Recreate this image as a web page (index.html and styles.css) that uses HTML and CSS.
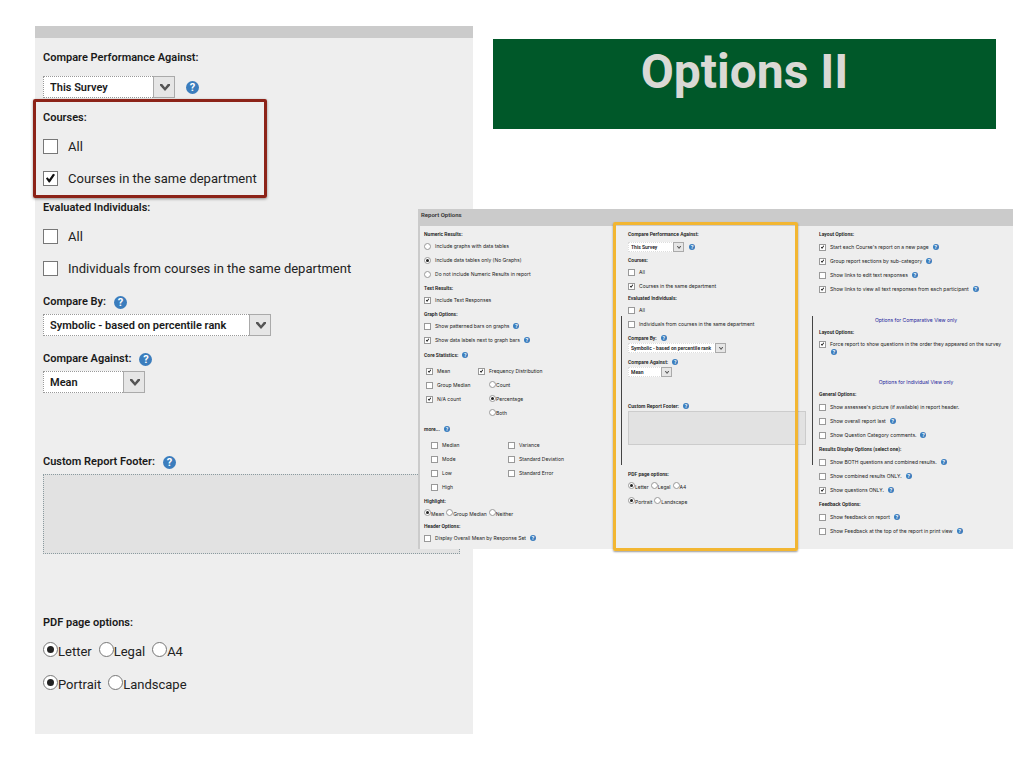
FILE: index.html
```html
<!DOCTYPE html>
<html lang="en">
<head>
    <meta charset="UTF-8">
    <meta name="viewport" content="width=device-width, initial-scale=1.0">
    <title>Options II</title>
    <link rel="stylesheet" href="styles.css">
</head>
<body>
    <main class="slide">
        <form class="panel">
            <div class="panel-bar"></div>
            <div class="panel-body">
                <section class="group">
                    <label class="heading" for="compare-to">Compare Performance Against:</label>
                    <div class="field space-md">
                        <span class="picker"><select id="compare-to" class="w-md"><option>This Survey</option></select></span>
                        <button type="button" class="help">?</button>
                    </div>
                </section>
                <section class="group space-md marked">
                    <h2 class="heading">Courses:</h2>
                    <label class="option"><input type="checkbox">All</label>
                    <label class="option"><input type="checkbox" checked>Courses in the same department</label>
                </section>
                <section class="group">
                    <h2 class="heading">Evaluated Individuals:</h2>
                    <label class="option"><input type="checkbox">All</label>
                    <label class="option"><input type="checkbox">Individuals from courses in the same department</label>
                </section>
                <section class="group space-sm">
                    <div class="heading"><label for="compare-by">Compare By:</label><button type="button" class="help">?</button></div>
                    <div class="field">
                        <span class="picker"><select id="compare-by" class="w-lg"><option>Symbolic - based on percentile rank</option></select></span>
                    </div>
                </section>
                <section class="group space-lg">
                    <div class="heading"><label for="compare-against">Compare Against:</label><button type="button" class="help">?</button></div>
                    <div class="field">
                        <span class="picker"><select id="compare-against" class="w-sm"><option>Mean</option></select></span>
                    </div>
                </section>
                <section class="group space-xl">
                    <div class="heading"><label for="footer-text">Custom Report Footer:</label><button type="button" class="help">?</button></div>
                    <textarea id="footer-text"></textarea>
                </section>
                <section class="group space-xl">
                    <h2 class="heading">PDF page options:</h2>
                    <div class="choices">
                        <label><input type="radio" name="paper" checked>Letter</label>
                        <label><input type="radio" name="paper">Legal</label>
                        <label><input type="radio" name="paper">A4</label>
                    </div>
                    <div class="choices">
                        <label><input type="radio" name="direction" checked>Portrait</label>
                        <label><input type="radio" name="direction">Landscape</label>
                    </div>
                </section>
            </div>
        </form>

        <header class="title">
            <h1>Options II</h1>
        </header>

        <!-- full options page, laid over the panel -->
        <form class="report">
            <h2 class="report-title">Report Options</h2>
            <div class="report-body">
                <div class="column">
                    <section class="group">
                        <h3 class="heading">Numeric Results:</h3>
                        <label class="option"><input type="radio" name="numeric">Include graphs with data tables</label>
                        <label class="option"><input type="radio" name="numeric" checked>Include data tables only (No Graphs)</label>
                        <label class="option"><input type="radio" name="numeric">Do not include Numeric Results in report</label>
                    </section>
                    <section class="group">
                        <h3 class="heading">Text Results:</h3>
                        <label class="option"><input type="checkbox" checked>Include Text Responses</label>
                    </section>
                    <section class="group">
                        <h3 class="heading">Graph Options:</h3>
                        <div class="option"><label><input type="checkbox">Show patterned bars on graphs</label><button type="button" class="help">?</button></div>
                        <div class="option"><label><input type="checkbox" checked>Show data labels next to graph bars</label><button type="button" class="help">?</button></div>
                    </section>
                    <section class="group space-sm">
                        <div class="heading"><h3>Core Statistics:</h3><button type="button" class="help">?</button></div>
                        <div class="stats">
                            <div>
                                <label class="option"><input type="checkbox" checked>Mean</label>
                                <label class="option"><input type="checkbox">Group Median</label>
                                <label class="option"><input type="checkbox" checked>N/A count</label>
                            </div>
                            <div>
                                <label class="option"><input type="checkbox" checked>Frequency Distribution</label>
                                <div class="choices"><label><input type="radio" name="freq">Count</label></div>
                                <div class="choices"><label><input type="radio" name="freq" checked>Percentage</label></div>
                                <div class="choices"><label><input type="radio" name="freq">Both</label></div>
                            </div>
                        </div>
                    </section>
                    <section class="group space-md">
                        <div class="heading"><h3>more...</h3><button type="button" class="help">?</button></div>
                        <div class="stats more">
                            <div>
                                <label class="option"><input type="checkbox">Median</label>
                                <label class="option"><input type="checkbox">Mode</label>
                                <label class="option"><input type="checkbox">Low</label>
                                <label class="option"><input type="checkbox">High</label>
                            </div>
                            <div>
                                <label class="option"><input type="checkbox">Variance</label>
                                <label class="option"><input type="checkbox">Standard Deviation</label>
                                <label class="option"><input type="checkbox">Standard Error</label>
                            </div>
                        </div>
                    </section>
                    <section class="group">
                        <h3 class="heading">Highlight:</h3>
                        <div class="choices">
                            <label><input type="radio" name="highlight" checked>Mean</label>
                            <label><input type="radio" name="highlight">Group Median</label>
                            <label><input type="radio" name="highlight">Neither</label>
                        </div>
                    </section>
                    <section class="group space-none">
                        <h3 class="heading">Header Options:</h3>
                        <div class="option"><label><input type="checkbox">Display Overall Mean by Response Set</label><button type="button" class="help">?</button></div>
                    </section>
                </div>

                <div class="column ruled boxed">
                    <section class="group">
                        <label class="heading" for="r-compare-to">Compare Performance Against:</label>
                        <div class="field space-sm">
                            <span class="picker"><select id="r-compare-to" class="w-md"><option>This Survey</option></select></span>
                            <button type="button" class="help">?</button>
                        </div>
                    </section>
                    <section class="group space-sm">
                        <h3 class="heading">Courses:</h3>
                        <label class="option"><input type="checkbox">All</label>
                        <label class="option"><input type="checkbox" checked>Courses in the same department</label>
                    </section>
                    <section class="group space-none">
                        <h3 class="heading">Evaluated Individuals:</h3>
                        <label class="option"><input type="checkbox">All</label>
                        <label class="option"><input type="checkbox">Individuals from courses in the same department</label>
                    </section>
                    <section class="group">
                        <div class="heading"><label for="r-compare-by">Compare By:</label><button type="button" class="help">?</button></div>
                        <div class="field">
                            <span class="picker"><select id="r-compare-by" class="w-lg"><option>Symbolic - based on percentile rank</option></select></span>
                        </div>
                    </section>
                    <section class="group space-md">
                        <div class="heading"><label for="r-compare-against">Compare Against:</label><button type="button" class="help">?</button></div>
                        <div class="field">
                            <span class="picker"><select id="r-compare-against" class="w-sm"><option>Mean</option></select></span>
                        </div>
                    </section>
                    <section class="group space-xl">
                        <div class="heading"><label for="r-footer-text">Custom Report Footer:</label><button type="button" class="help">?</button></div>
                        <textarea id="r-footer-text"></textarea>
                    </section>
                    <section class="group space-xl">
                        <h3 class="heading">PDF page options:</h3>
                        <div class="choices">
                            <label><input type="radio" name="r-paper" checked>Letter</label>
                            <label><input type="radio" name="r-paper">Legal</label>
                            <label><input type="radio" name="r-paper">A4</label>
                        </div>
                        <div class="choices">
                            <label><input type="radio" name="r-direction" checked>Portrait</label>
                            <label><input type="radio" name="r-direction">Landscape</label>
                        </div>
                    </section>
                </div>

                <div class="column ruled views">
                    <section class="group">
                        <h3 class="heading">Layout Options:</h3>
                        <div class="option"><label><input type="checkbox" checked>Start each Course's report on a new page</label><button type="button" class="help">?</button></div>
                        <div class="option"><label><input type="checkbox" checked>Group report sections by sub-category</label><button type="button" class="help">?</button></div>
                        <div class="option"><label><input type="checkbox">Show links to edit text responses</label><button type="button" class="help">?</button></div>
                        <div class="option"><label><input type="checkbox" checked>Show links to view all text responses from each participant</label><button type="button" class="help">?</button></div>
                    </section>
                    <p class="note">Options for Comparative View only</p>
                    <section class="group space-none">
                        <h3 class="heading">Layout Options:</h3>
                        <div class="option wrapped"><label><input type="checkbox" checked>Force report to show questions in the order they appeared on the survey</label><button type="button" class="help">?</button></div>
                    </section>
                    <p class="note">Options for Individual View only</p>
                    <section class="group space-none">
                        <h3 class="heading">General Options:</h3>
                        <label class="option"><input type="checkbox">Show assessee's picture (if available) in report header.</label>
                        <div class="option"><label><input type="checkbox">Show overall report last</label><button type="button" class="help">?</button></div>
                        <div class="option"><label><input type="checkbox">Show Question Category comments.</label><button type="button" class="help">?</button></div>
                    </section>
                    <section class="group">
                        <h3 class="heading">Results Display Options (select one):</h3>
                        <div class="option"><label><input type="checkbox">Show BOTH questions and combined results.</label><button type="button" class="help">?</button></div>
                        <div class="option"><label><input type="checkbox">Show combined results ONLY.</label><button type="button" class="help">?</button></div>
                        <div class="option"><label><input type="checkbox" checked>Show questions ONLY.</label><button type="button" class="help">?</button></div>
                    </section>
                    <section class="group">
                        <h3 class="heading">Feedback Options:</h3>
                        <div class="option"><label><input type="checkbox">Show feedback on report</label><button type="button" class="help">?</button></div>
                        <div class="option"><label><input type="checkbox">Show Feedback at the top of the report in print view</label><button type="button" class="help">?</button></div>
                    </section>
                </div>
            </div>
        </form>
    </main>
</body>
</html>
```
FILE: styles.css
```css
* {
    box-sizing: border-box;
}
body {
    margin: 0;
    background: #fff;
    color: #222;
    font-family: Roboto, "Liberation Sans", sans-serif;
}
h1, h2, h3, p {
    margin: 0;
    font-size: inherit;
    font-weight: inherit;
}
.slide {
    position: relative;
    display: grid;
    grid-template-columns: 438fr 503fr;
    column-gap: 20px;
    align-items: start;
    padding: 26px 28px 34px 35px;
}

/* title */
.title {
    margin-top: 13px;
    padding: 8px 0 32px;
    background: #005829;
    color: #dad9d5;
    text-align: center;
}
.title h1 {
    font: bold 48px/50px Roboto, sans-serif;
}

/* shared controls */
.heading {
    display: flex;
    align-items: center;
    font-weight: 600;
    color: #1a1a1a;
}
.option,
.option label,
.choices,
.choices label,
.field {
    display: flex;
    align-items: center;
}
input {
    flex: none;
    appearance: none;
    position: relative;
    margin: 0;
    background: #fff;
    border: 1px solid #777;
}
input[type="radio"] {
    border-radius: 50%;
}
input[type="radio"]:checked::after {
    content: "";
    position: absolute;
    inset: 20%;
    border-radius: 50%;
    background: #222;
}
input[type="checkbox"]:checked::after {
    content: "";
    position: absolute;
    inset: 15%;
    background: #111;
    clip-path: polygon(0 55%, 16% 42%, 36% 64%, 78% 4%, 100% 14%, 42% 100%, 32% 100%);
}
.help {
    flex: none;
    padding: 0;
    border: 0;
    border-radius: 50%;
    background: #3b7dbd;
    color: #fff;
    font-family: inherit;
    font-weight: bold;
    text-align: center;
}
.picker {
    position: relative;
    display: flex;
}
select {
    appearance: none;
    margin: 0;
    border: 1px dotted #999;
    border-radius: 0;
    background: #fff;
    color: #1a1a1a;
    font-family: inherit;
    font-weight: 600;
}
.picker::before {
    content: "";
    position: absolute;
    top: 0;
    right: 0;
    bottom: 0;
    border: 1px solid #aaa;
    background: #e6e6e6;
    pointer-events: none;
}
.picker::after {
    content: "";
    position: absolute;
    background: #555;
    clip-path: polygon(0 0, 22% 0, 50% 50%, 78% 0, 100% 0, 100% 20%, 50% 100%, 0 20%);
    pointer-events: none;
}
textarea {
    display: block;
    margin: 0;
    border: 1px dotted #8a9a9f;
    background: #e2e2e2;
    font-family: inherit;
    resize: none;
}

/* large panel */
.panel {
    min-width: 0;
    background: #eee;
    font-size: 13px;
}
.panel-bar {
    height: 12px;
    background: #cbcbcb;
}
.panel-body {
    padding: 9px 13px 33px 8px;
}
.panel .group {
    display: flow-root;
    margin-top: 3px;
}
.panel .group:first-child {
    margin-top: 0;
}
.panel .heading {
    height: 20px;
    margin-bottom: 3px;
    font-size: 11px;
}
.panel .option {
    height: 32px;
    gap: 10px;
}
.panel input {
    width: 15px;
    height: 15px;
}
.panel .field {
    height: 22px;
    gap: 11px;
}
.panel .group.space-sm {
    margin-top: 7px;
}
.panel .field.space-md,
.panel .group.space-md {
    margin-top: 9px;
}
.panel .group.space-lg {
    margin-top: 12px;
}
.panel .group.space-xl {
    margin-top: 58px;
}
.panel .heading .help {
    margin: 2px 0 0 8px;
}
.panel .help {
    width: 13px;
    height: 13px;
    font-size: 11px;
    line-height: 13px;
}
.panel select {
    height: 22px;
    padding: 0 6px;
    font-size: 11px;
}
.panel .picker::before {
    width: 20px;
}
.panel .picker::after {
    top: 8px;
    right: 5px;
    width: 10px;
    height: 7px;
}
.panel .w-sm {
    width: 102px;
}
.panel .w-md {
    width: 132px;
}
.panel .w-lg {
    width: 228px;
}
.panel textarea {
    width: 100%;
    height: 80px;
}
.panel .choices {
    height: 33px;
    gap: 7px;
}
.panel .choices input {
    margin-bottom: 4px;
}
.marked {
    position: relative;
    width: fit-content;
}
.marked::after {
    content: "";
    position: absolute;
    inset: -8px -10px -4px -10px;
    border: 3px solid #8c2318;
    border-radius: 2px;
    box-shadow: 0 1px 3px rgba(0, 0, 0, 0.4);
    pointer-events: none;
}

/* report overview */
.report {
    position: absolute;
    top: 209px;
    right: 11px;
    width: 58.1%;
    background: #eee;
    border-left: 2px solid #cbcbcb;
    font-family: Inter, sans-serif;
    font-size: 5px;
    line-height: 10px;
}
.report-title {
    height: 17px;
    padding-left: 1px;
    background: #cbcbcb;
    color: #333;
    font: 600 6px/11px Roboto, sans-serif;
}
.report-body {
    display: grid;
    grid-template-columns: 204fr 191fr 194fr;
    padding: 3px 0 4px 4px;
}
.column {
    position: relative;
    min-width: 0;
}
.report .group {
    margin-top: 2px;
}
.column > .group:first-child,
.report .group.space-none {
    margin-top: 0;
}
.report .group.space-sm {
    margin-top: 3px;
}
.report .group.space-md {
    margin-top: 4px;
}
.report .group.space-xl {
    margin-top: 24px;
}
.report .field.space-sm {
    margin-top: 3px;
}
.report .heading {
    height: 10px;
    font-family: Roboto, sans-serif;
}
.report .views .heading {
    margin-bottom: 1px;
}
.report .option {
    height: 14px;
}
.report .option,
.report .option label {
    gap: 4px;
}
.report input {
    width: 7px;
    height: 7px;
    border-color: #999;
}
.report .help {
    width: 6px;
    height: 6px;
    font-size: 5px;
    line-height: 6px;
}
.report .heading .help {
    margin-left: 4px;
}
.report .field {
    height: 10px;
    gap: 5px;
}
.report select {
    height: 10px;
    padding: 0 2px;
    border-color: #ddd;
    font-size: 5px;
    font-family: Roboto, sans-serif;
}
.report .picker::before {
    width: 9px;
}
.report .picker::after {
    top: 4px;
    right: 3px;
    width: 4px;
    height: 3px;
}
.report .w-sm {
    width: 44px;
}
.report .w-md {
    width: 56px;
}
.report .w-lg {
    width: 98px;
}
.report textarea {
    width: 178px;
    height: 34px;
    border: 1px solid #ccc;
}
.report .choices {
    height: 15px;
    gap: 2px;
}
.report .choices input {
    margin-bottom: 2px;
}
.stats {
    display: grid;
    grid-template-columns: 52px 1fr;
    padding: 4px 0 0 2px;
}
.report .stats .choices {
    height: 14px;
    padding-left: 11px;
}
.stats.more {
    grid-template-columns: 77px 1fr;
    padding: 4px 0 0 7px;
}
.report .note {
    height: 14px;
    margin-top: 17px;
    color: #22229a;
    line-height: 14px;
    text-align: center;
}
.report .wrapped {
    height: 20px;
    flex-direction: column;
    align-items: flex-start;
    gap: 0;
    padding-top: 1px;
}
.wrapped .help {
    margin-left: 12px;
}
.ruled::before {
    content: "";
    position: absolute;
    top: 87px;
    left: -7px;
    width: 1px;
    height: 149px;
    background: #444;
}
.boxed::after {
    content: "";
    position: absolute;
    inset: -7px 21px -6px -15px;
    border: 3px solid #f2b632;
    border-radius: 2px;
    box-shadow: 0 1px 2px rgba(0, 0, 0, 0.4);
    pointer-events: none;
}
```
